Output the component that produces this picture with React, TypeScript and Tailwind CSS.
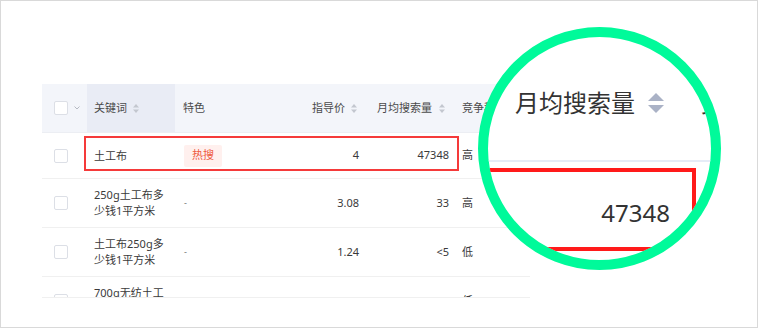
import React from "react";

function Sort({ className = "" }: { className?: string }) {
  return (
    <svg width="6" height="9" viewBox="0 0 6 9" className={className}>
      <path d="M3 0 L6 3.5 H0 Z" fill="#c3c7cf" />
      <path d="M0 5.5 H6 L3 9 Z" fill="#c3c7cf" />
    </svg>
  );
}

function Check() {
  return <div className="w-[14px] h-[14px] rounded-[2px] border border-[#dcdfe6] bg-white shrink-0" />;
}

type Row = { k: string[]; tag?: string; price: string; vol: string; comp: string; h: string };

const rows: Row[] = [
  { k: ["土工布"], tag: "热搜", price: "4", vol: "47348", comp: "高", h: "h-[46px]" },
  { k: ["250g土工布多", "少钱1平方米"], price: "3.08", vol: "33", comp: "高", h: "h-[49px]" },
  { k: ["土工布250g多", "少钱1平方米"], price: "1.24", vol: "<5", comp: "低", h: "h-[49px]" },
  { k: ["700g无纺土工", "布价格"], price: "1.34", vol: "<5", comp: "低", h: "h-[49px]" },
];

export default function App() {
  return (
    <div className="w-[763px] h-[329px] bg-white font-['Noto_Sans','Noto_Sans_CJK_SC',sans-serif]">
      <div className="relative w-[758px] h-[328px] border border-[#d9d9d9] bg-white overflow-hidden">
        {/* table */}
        <div className="ml-[41px] mt-[83px] w-[488px] h-[214px] overflow-hidden border-b border-[#f0f0f0] text-[11px] text-[#3a3a3a]">
          <div className="flex h-[49px] bg-[#f3f5fa] text-[#4a4a4a] border-b border-[#eceef3]">
            <div className="w-[45px] flex items-center pl-[12px] gap-[6px]">
              <Check />
              <svg width="6" height="4" viewBox="0 0 6 4">
                <path d="M0.5 0.5 L3 3 L5.5 0.5" fill="none" stroke="#b5b9c2" strokeWidth="1" />
              </svg>
            </div>
            <div className="w-[88px] flex items-center pl-[7px] bg-[#e9ecf5]">
              <span>关键词</span>
              <Sort className="ml-[6px]" />
            </div>
            <div className="w-[110px] flex items-center pl-[8px]">特色</div>
            <div className="w-[82px] flex items-center justify-end pr-[10px]">
              <span>指导价</span>
              <Sort className="ml-[6px]" />
            </div>
            <div className="w-[90px] flex items-center justify-end pr-[12px]">
              <span>月均搜索量</span>
              <Sort className="ml-[7px]" />
            </div>
            <div className="w-[73px] flex items-center pl-[5px] whitespace-nowrap">竞争程度</div>
          </div>
          {rows.map((r, i) => (
            <div key={i} className={`flex ${r.h} border-b border-[#f0f0f0] bg-white`}>
              <div className="w-[45px] flex items-center pl-[12px]">
                <Check />
              </div>
              <div className="w-[88px] flex flex-col justify-center pl-[7px] leading-[16px]">
                {r.k.map((l, j) => (
                  <span key={j}>{l}</span>
                ))}
              </div>
              <div className="w-[110px] flex items-center pl-[9px]">
                {r.tag ? (
                  <span className="px-[8px] h-[22px] flex items-center rounded-[2px] bg-[#fff0ee] text-[#ee5a3f]">{r.tag}</span>
                ) : (
                  <span className="text-[#777] text-[9px]">-</span>
                )}
              </div>
              <div className="w-[82px] flex items-center justify-end pr-[8px]">{r.price}</div>
              <div className="w-[90px] flex items-center justify-end pr-[8px]">{r.vol}</div>
              <div className="w-[73px] flex items-center pl-[5px]">{r.comp}</div>
            </div>
          ))}
        </div>

        {/* red highlight box on the table */}
        <div className="absolute left-[83px] top-[135px] w-[375px] h-[35px] border-2 border-[#f53a3a]" />

        {/* magnifier */}
        <div className="absolute left-[477px] top-[26px] w-[243px] h-[243px] rounded-full border-[10px] border-[#00fa9a] bg-white overflow-hidden">
          <div className="absolute left-[27px] top-[54px] text-[24px] leading-[24px] text-[#333] whitespace-nowrap">月均搜索量</div>
          <svg className="absolute left-[160px] top-[56px]" width="16" height="20" viewBox="0 0 16 20">
            <path d="M8 0 L16 8 H0 Z" fill="#aab2c6" />
            <path d="M0 12 H16 L8 20 Z" fill="#aab2c6" />
          </svg>
          <div className="absolute left-[213px] top-[54px] text-[24px] leading-[24px] text-[#333] whitespace-nowrap">竞争</div>
          <div className="absolute left-0 right-0 top-[123px] h-[2px] bg-[#e6ecf7]" />
          <div className="absolute left-[-20px] top-[131px] w-[228px] h-[83px] border-[4px] border-[#ff1a1a]" />
          <div className="absolute right-[41px] top-[164px] text-[24px] leading-[24px] text-[#333]">47348</div>
        </div>
      </div>
    </div>
  );
}
